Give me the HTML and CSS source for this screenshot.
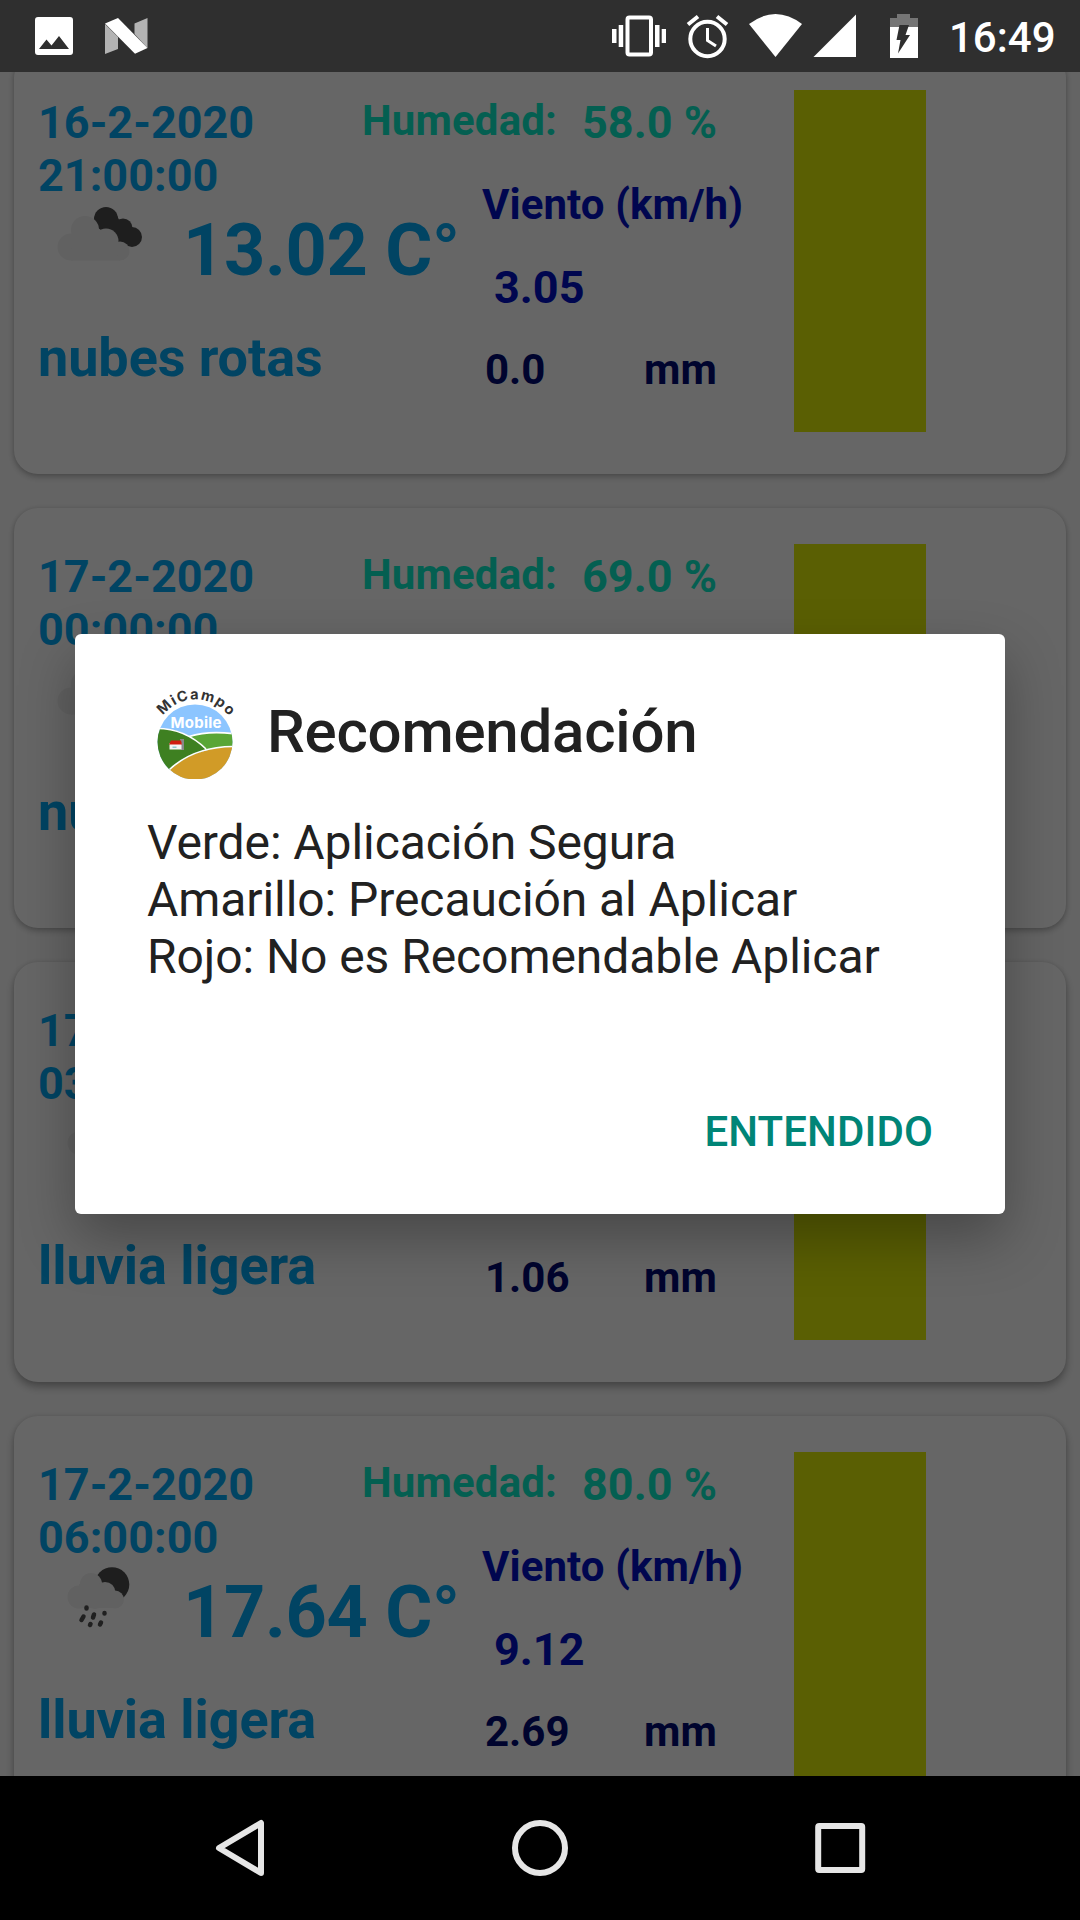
FILE: index.html
```html
<!DOCTYPE html>
<html lang="es">
<head>
<meta charset="utf-8">
<title>MiCampo Mobile</title>
<link rel="stylesheet" href="styles.css">
</head>
<body>
<svg class="defs" width="0" height="0" aria-hidden="true">
  <symbol id="clouds" viewBox="0 0 145 84">
    <g fill="#4c4c4c"><circle cx="68" cy="17" r="12"/><circle cx="85" cy="26" r="9.500"/><circle cx="94" cy="35" r="10"/><path d="M60 24l18-12 14 26-6 6-10 0z"/></g>
    <g fill="#f2f2f2"><circle cx="33" cy="45" r="13.500"/><circle cx="47" cy="28" r="14"/><circle cx="68" cy="39" r="12.500"/><circle cx="82" cy="49" r="9.500"/><path d="M34 26h24v6h20v18l4 8.500H33z"/></g>
  </symbol>
  <symbol id="rain" viewBox="0 0 145 84">
    <circle cx="74" cy="20.500" r="17.300" fill="#4c4c4c"/>
    <g fill="#f2f2f2"><circle cx="41" cy="33" r="11.500"/><circle cx="53" cy="20" r="11"/><circle cx="67" cy="28.500" r="10.500"/><circle cx="77" cy="35.500" r="9"/><path d="M41 20h22l14 24H41z"/><circle cx="57" cy="36" r="9"/></g>
    <g stroke="#505050" stroke-width="4.500" stroke-linecap="round" fill="none"><path d="M48.500 43.500v1M56 50.500l-1 3M66.500 49v.5M45.500 52.500l-2 3.500M52.500 60l-.5 1M63 58.500l-1 2"/></g>
  </symbol>
</svg>

<div class="screen">
  <header class="status">
    <div class="status-side">
      <svg class="s-photo" viewBox="35 17 38 38" width="38" height="38"><path fill="#fff" fill-rule="evenodd" d="M38 17h32q3 0 3 3v32q0 3-3 3H38q-3 0-3-3V20q0-3 3-3zM39 49h30l-10-13-7.500 9.500-5-6z"/></svg>
      <svg class="s-n" viewBox="105 18 43 36" width="43" height="36"><path fill="#b3b3b3" d="M105 24l13 13v12l-13 5zM134.500 23.500l13-5.500v30l-13-14z"/><path fill="#fff" d="M105 23.500l13-5.500 29.500 30-12.500 5.700z"/></svg>
    </div>
    <div class="status-side">
      <svg viewBox="612 0 54 72" width="54" height="72"><rect x="627.500" y="17.500" width="23.500" height="37" rx="2" fill="none" stroke="#fff" stroke-width="4"/><path fill="#fff" d="M612 29h4.500v14H612zM618.700 25h4.500v22h-4.500zM655 25h4.500v22H655zM661.700 29h4.500v14h-4.500z"/></svg>
      <svg class="s-alarm" viewBox="686 0 43 72" width="43" height="72"><g fill="none" stroke="#fff" stroke-width="4"><circle cx="707.500" cy="39" r="17.200"/><path d="M688 24.500l10-8M727 24.500l-10-8"/><path stroke-width="3" d="M707.500 28v12.500l8.500 5.500"/></g></svg>
      <svg class="s-wifi" viewBox="749 0 53 72" width="53" height="72"><path fill="#fff" d="M749 24q26.500-20 53 0l-26.500 33z"/></svg>
      <svg class="s-signal" viewBox="813 0 43 72" width="43" height="72"><path fill="#fff" d="M856 14.500V57h-42.500z"/></svg>
      <svg class="s-battery" viewBox="890 0 28 72" width="28" height="72"><path fill="#757575" d="M897 14h13v4h8v10h-28V18h7z"/><path fill="#fff" d="M890 27h28v31h-28z"/><path fill="#2f2f2f" d="M899.500 25h9.500l-3.500 10h4.500L898 53.500l2.500-13.500h-4z"/></svg>
      <time class="clock">16:49</time>
    </div>
  </header>

  <main class="content">
    <section class="forecast">
      <article class="card">
        <div class="summary">
          <div class="date">16-2-2020<br>21:00:00</div>
          <div class="weather"><svg width="145" height="84"><use href="#clouds"/></svg><span class="temp">13.02 C°</span></div>
          <div class="desc">nubes rotas</div>
        </div>
        <div class="details">
          <div class="humidity"><span>Humedad:</span><b>58.0 %</b></div>
          <div class="wind-label">Viento (km/h)</div>
          <div class="wind">3.05</div>
          <div class="water"><span>0.0</span><span>mm</span></div>
        </div>
        <div class="level"></div>
      </article>
      <article class="card">
        <div class="summary">
          <div class="date">17-2-2020<br>00:00:00</div>
          <div class="weather"><svg width="145" height="84"><use href="#clouds"/></svg></div>
          <div class="desc">nubes rotas</div>
        </div>
        <div class="details">
          <div class="humidity"><span>Humedad:</span><b>69.0 %</b></div>
        </div>
        <div class="level"></div>
      </article>
      <article class="card raised">
        <div class="summary">
          <div class="date">17-2-2020<br>03:00:00</div>
          <div class="weather"><svg width="145" height="84"><use href="#rain"/></svg></div>
          <div class="desc">lluvia ligera</div>
        </div>
        <div class="details">
          <div class="humidity"></div>
          <div class="wind-label"></div>
          <div class="wind"></div>
          <div class="water"><span>1.06</span><span>mm</span></div>
        </div>
        <div class="level"></div>
      </article>
      <article class="card raised">
        <div class="summary">
          <div class="date">17-2-2020<br>06:00:00</div>
          <div class="weather"><svg width="145" height="84"><use href="#rain"/></svg><span class="temp">17.64 C°</span></div>
          <div class="desc">lluvia ligera</div>
        </div>
        <div class="details">
          <div class="humidity"><span>Humedad:</span><b>80.0 %</b></div>
          <div class="wind-label">Viento (km/h)</div>
          <div class="wind">9.12</div>
          <div class="water"><span>2.69</span><span>mm</span></div>
        </div>
        <div class="level"></div>
      </article>
    </section>

    <div class="scrim">
      <div class="dialog" role="dialog">
        <div class="dialog-head">
          <svg class="logo" viewBox="147 683 96 96" width="96" height="96">
            <clipPath id="disc"><circle cx="195" cy="742" r="37.500"/></clipPath>
            <path id="arc" fill="none" d="M163 715.500A41.500 41.500 0 0 1 230 717.500"/>
            <g clip-path="url(#disc)">
              <path fill="#8cc5ff" d="M157 704h76v76h-76z"/>
              <path fill="#59a636" d="M189 737q22-7 45-3v14l-28 2z"/>
              <path fill="#3e8021" d="M157 729q25-2 49 20l-35 21-14-3z"/>
              <path fill="#d19b27" d="M169 771q25-24 65-24v34h-64z"/>
              <path fill="none" stroke="#fff" stroke-width="1.700" d="M157 728.500q28 0 49 20.500M189 736.500q19-6 45-2.700M169 770q25-23.500 65-23.500"/>
              <path fill="#888" d="M180 739h4v11h-3z"/><path fill="#f4f4f4" d="M169.500 743h12v6.500h-12z"/><path fill="#d01c10" d="M171 740.500h10l1 4h-13z"/>
              <path fill="#8fc7cf" d="M172.500 746.500h4v1.500h-4z"/>
            </g>
            <text class="logo-arc"><textPath href="#arc" textLength="76">MiCampo</textPath></text>
            <text class="logo-name" x="196" y="727.500" text-anchor="middle" textLength="51">Mobile</text>
          </svg>
          <h1 class="title">Recomendación</h1>
        </div>
        <p class="message">Verde: Aplicación Segura<br>Amarillo: Precaución al Aplicar<br>Rojo: No es Recomendable Aplicar</p>
        <button class="accept" type="button">ENTENDIDO</button>
      </div>
    </div>
  </main>

  <nav class="navbar">
    <svg viewBox="0 0 60 60" width="60" height="60"><path d="M51 5v50L9 30z"/></svg>
    <svg viewBox="0 0 60 60" width="60" height="60"><circle cx="30" cy="30" r="25"/></svg>
    <svg viewBox="0 0 60 60" width="60" height="60"><rect x="8.200" y="8" width="44" height="44" rx="1"/></svg>
  </nav>
</div>
</body>
</html>
```

FILE: styles.css
```css
* { box-sizing: border-box; }

body {
  margin: 0;
  background: #000;
  font-family: Roboto, "Liberation Sans", sans-serif;
}

svg { display: block; flex: none; }
.defs { position: absolute; }

.screen {
  width: 1080px;
  height: 1920px;
  display: flex;
  flex-direction: column;
  overflow: hidden;
}

/* Status bar */
.status {
  flex: none;
  height: 72px;
  display: flex;
  justify-content: space-between;
  padding: 0 26px 0 35px;
  background: #2f2f2f;
}
.status-side { display: flex; align-items: center; }
.s-n { margin-left: 32px; }
.s-alarm { margin-left: 20px; }
.s-wifi { margin-left: 20px; }
.s-signal { margin-left: 11px; }
.s-battery { margin-left: 34px; }
.clock {
  margin-left: 31px;
  width: 105px;
  padding-top: 3px;
  font-size: 42px;
  line-height: 49px;
  font-weight: 500;
  color: #fff;
  white-space: nowrap;
}

/* Forecast list */
.content {
  position: relative;
  flex: none;
  height: 1704px;
  overflow: hidden;
  background: #fafafa;
}
.forecast {
  display: flex;
  flex-direction: column;
  gap: 34px;
  margin: -18px 14px 0;
}
.card {
  flex: none;
  height: 420px;
  display: grid;
  grid-template-columns: 324px 432px 132px;
  padding: 36px 24px;
  border-radius: 24px;
  background: #fff;
  box-shadow: 0 3px 6px rgba(0, 0, 0, .24), 0 0 4px rgba(0, 0, 0, .1);
}
.raised { box-shadow: 0 5px 9px rgba(0, 0, 0, .3), 0 0 4px rgba(0, 0, 0, .1); }
.summary, .details {
  display: flex;
  flex-direction: column;
  padding-top: 6px;
  font-weight: 700;
  white-space: nowrap;
}
.summary { color: #03abf7; }
.date {
  height: 106px;
  font-size: 45px;
  line-height: 53px;
}
.weather { display: flex; height: 124px; }
.temp {
  padding-top: 7px;
  font-size: 72px;
  line-height: 84px;
  letter-spacing: -.3px;
}
.desc { font-size: 54px; line-height: 63px; letter-spacing: -.08px; }

.details {
  font-size: 42px;
  line-height: 49px;
  color: #0010c6;
}
.humidity {
  display: flex;
  height: 84px;
  color: #0aeecb;
}
.humidity span { width: 220px; letter-spacing: .15px; }
.humidity b { font-size: 45px; font-weight: 700; line-height: 53px; }
.wind-label { height: 81px; padding-left: 120px; letter-spacing: .08px; }
.wind {
  height: 84px;
  padding-left: 132px;
  font-size: 45px;
  line-height: 53px;
}
.water {
  display: flex;
  padding-left: 123px;
  color: #000b74;
}
.water span:first-child { width: 159px; }
.level { height: 342px; background: #e1ee08; }

/* Dialog */
.scrim {
  position: absolute;
  inset: 0;
  display: flex;
  align-items: center;
  justify-content: center;
  background: rgba(0, 0, 0, .6);
}
.dialog {
  width: 930px;
  height: 580px;
  display: flex;
  flex-direction: column;
  padding: 49px 72px 58px;
  border-radius: 6px;
  background: #fff;
  color: #212121;
  box-shadow: 0 24px 56px rgba(0, 0, 0, .3);
}
.dialog-head {
  display: flex;
  align-items: center;
  gap: 24px;
  height: 96px;
}
.logo-arc { font: 700 14.5px Inter, sans-serif; fill: #333; }
.logo-name { font: 700 15px Inter, sans-serif; fill: #fff; }
.title {
  margin: 0;
  padding-top: 1px;
  font-size: 60px;
  line-height: 70px;
  font-weight: 500;
  letter-spacing: -.22px;
}
.message {
  margin: 35px 0 0;
  font-size: 48px;
  line-height: 57px;
  letter-spacing: -.07px;
}
.accept {
  align-self: flex-end;
  margin-top: auto;
  padding: 0;
  border: 0;
  background: none;
  font: 500 42px/49px Roboto, sans-serif;
  letter-spacing: .1px;
  color: #008577;
}

/* System navigation */
.navbar {
  flex: none;
  height: 144px;
  display: flex;
  align-items: center;
  justify-content: center;
  gap: 240px;
  background: #000;
}
.navbar svg {
  fill: none;
  stroke: #e6e6e6;
  stroke-width: 6;
  stroke-linejoin: round;
}
```
